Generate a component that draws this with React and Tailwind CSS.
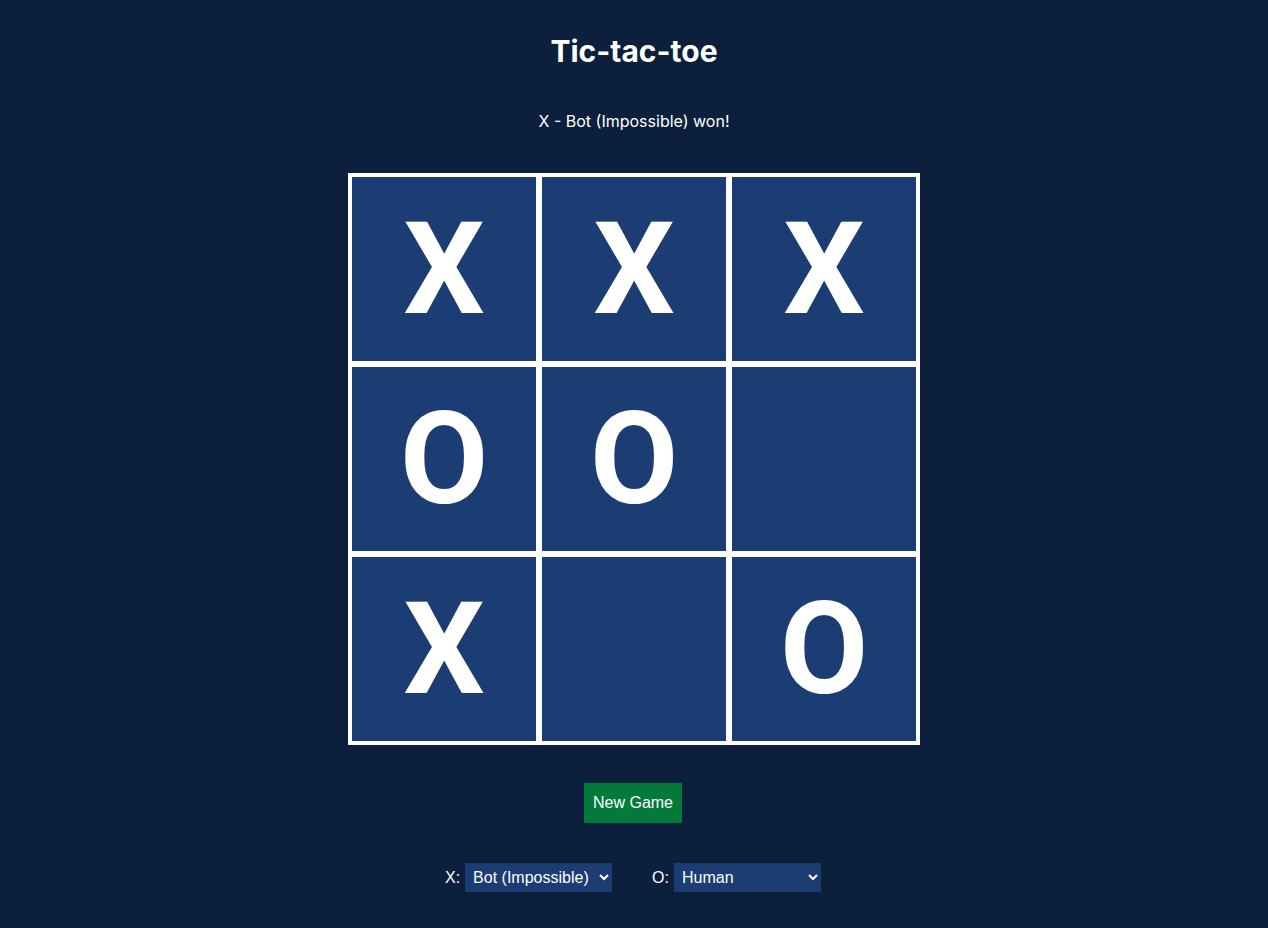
import React, { useState } from 'react';

const board = ['X', 'X', 'X', 'O', 'O', '', 'X', '', 'O'];

function Cell({ value }) {
  return (
    <div className="w-[184px] h-[184px] bg-[#1b3d73] flex items-center justify-center text-white font-bold text-[128px] leading-none font-['Roboto',sans-serif]">
      {value}
    </div>
  );
}

function PlayerSelect({ label, value, onChange }) {
  return (
    <label className="flex items-center gap-[5px] text-white text-base font-['Liberation_Sans',Arial,sans-serif]">
      <span>{label}</span>
      <select
        value={value}
        onChange={e => onChange(e.target.value)}
        className="w-[147px] h-[29px] bg-[#1b3d73] text-white text-base px-[4px]"
      >
        <option>Human</option>
        <option>Bot (Easy)</option>
        <option>Bot (Medium)</option>
        <option>Bot (Impossible)</option>
      </select>
    </label>
  );
}

export default function App() {
  const [x, setX] = useState('Bot (Impossible)');
  const [o, setO] = useState('Human');

  return (
    <div className="min-h-screen bg-[#0c1f3c] flex flex-col items-center font-['Inter',sans-serif] text-white">
      <h1 className="mt-[33px] text-3xl font-bold leading-[36px]">Tic-tac-toe</h1>
      <p className="mt-[40px] text-base leading-6">X - Bot (Impossible) won!</p>

      {/* Board */}
      <div className="mt-[40px] bg-white p-[4px] grid grid-cols-3 gap-[6px]">
        {board.map((v, i) => (
          <Cell key={i} value={v} />
        ))}
      </div>

      <button className="mt-[38px] mr-[2px] h-[40px] px-[9px] bg-[#047a3a] text-white text-base font-['Liberation_Sans',Arial,sans-serif]">
        New Game
      </button>

      <div className="mt-[40px] mr-[2px] flex items-center gap-[40px]">
        <PlayerSelect label="X:" value={x} onChange={setX} />
        <PlayerSelect label="O:" value={o} onChange={setO} />
      </div>
    </div>
  );
}
